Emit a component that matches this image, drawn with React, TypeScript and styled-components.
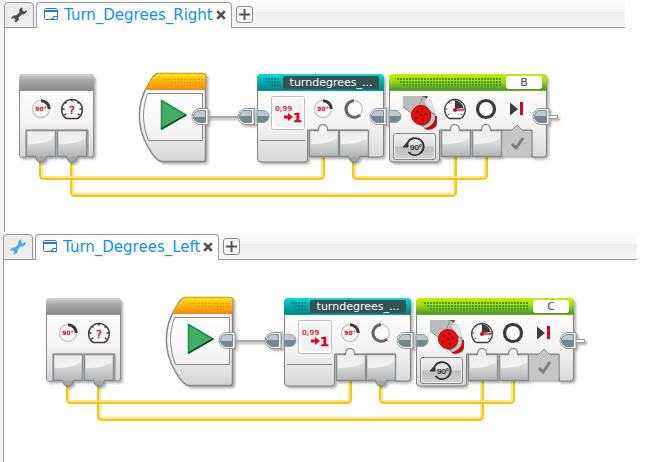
import React from "react";
import styled, { createGlobalStyle } from "styled-components";

const GlobalStyle = createGlobalStyle`
  *, *::before, *::after { box-sizing: border-box; }
  body { margin: 0; background: #fff; font-family: "DejaVu Sans", Verdana, sans-serif; }
  button { font: inherit; padding: 0; cursor: pointer; }
  svg { display: block; }
`;

/* ---------- editor chrome ---------- */

const Page = styled.main`
  display: flex;
  flex-direction: column;
  min-height: 100vh;
`;

const Panel = styled.section<{ $gutter: number; $right: number; $grow?: boolean }>`
  display: flex;
  flex-direction: column;
  flex: ${(p) => (p.$grow ? "1 0 auto" : "0 0 auto")};
  padding-left: ${(p) => p.$gutter}px;
  margin-right: ${(p) => p.$right}px;
  background: linear-gradient(90deg, #f3f4f6 ${(p) => p.$gutter}px, #fff ${(p) => p.$gutter}px);
`;

const TabBar = styled.div`
  display: flex;
  align-items: flex-end;
  height: 28px;
  background: linear-gradient(#fcfcfc 0, #f7f7f7 12px, #efefef 12px, #f7f7f7 27px, #999 27px);
`;

const ToolTab = styled.button`
  display: flex;
  align-items: center;
  justify-content: center;
  width: 30px;
  height: 26px;
  margin-right: 2px;
  border: 1px solid #999;
  border-radius: 4px 4px 0 0;
  background: #ededed;
`;

const Tab = styled.div`
  display: flex;
  align-items: center;
  gap: 3px;
  height: 26px;
  padding: 0 5px 2px 7px;
  border: 1px solid #999;
  border-bottom: 0;
  border-radius: 4px 4px 0 0;
  background: #fff;
`;

const TabLabel = styled.button`
  display: flex;
  align-items: center;
  gap: 6px;
  border: 0;
  background: none;
  color: #0a90ff;
  font-size: 15px;
  line-height: 20px;
  white-space: nowrap;
`;

const CloseButton = styled.button`
  border: 0;
  background: none;
`;

const AddButton = styled.button`
  display: flex;
  align-items: center;
  justify-content: center;
  width: 17px;
  height: 17px;
  margin: 0 0 5px 4px;
  border: 1px solid #8c8c8c;
  border-radius: 3px;
  background: #f8f8f8;
`;

const Canvas = styled.div<{ $top: number; $left: number; $bottom: number }>`
  flex: 1 0 auto;
  padding: ${(p) => `${p.$top}px 0 ${p.$bottom}px ${p.$left}px`};
  border-left: 1px solid #999;
  background: #fff;
`;

/* ---------- programming blocks ---------- */

const Program = styled.div`
  position: relative;
  isolation: isolate;
  width: 545px;
  height: 130px;
`;

const Wires = styled.svg`
  position: absolute;
  inset: 0;
`;

/* isolation keeps each outline behind its own controls and above the wires */
const Node = styled.article<{ $x: number; $w: number }>`
  position: absolute;
  isolation: isolate;
  top: 0;
  left: ${(p) => p.$x}px;
  width: ${(p) => p.$w}px;
  height: 90px;
  padding-top: 1px;
`;

const Silhouette = styled.svg`
  position: absolute;
  top: 0;
  left: 0;
  overflow: visible;
  z-index: -1;
  filter: drop-shadow(2px 2px 1px rgba(0, 0, 0, 0.3));
`;

const headerFill = {
  grey: "linear-gradient(#d2d2d2, #a9a9a9 40%, #8a8a8a)",
  teal: "linear-gradient(#08e0dc, #02b3b3 40%, #078484)",
  green: "linear-gradient(#c2f400, #a9dd12 40%, #449a38)",
};

const Header = styled.header<{ $tone: keyof typeof headerFill }>`
  display: flex;
  align-items: center;
  gap: 4px;
  height: 17px;
  padding: 0 5px;
  border-bottom: 1px solid rgba(0, 0, 0, 0.3);
  border-radius: 4px 4px 0 0;
  background: ${(p) => headerFill[p.$tone]};
`;

const Dots = styled.span<{ $color: string }>`
  flex: 1;
  height: 9px;
  background: radial-gradient(circle at 1px 1px, ${(p) => p.$color} 0.9px, transparent 1px) 0 0 / 3px 3px;
  clip-path: polygon(0 0, 100% 0, 100% 100%, 10px 100%);
`;

const BlockName = styled.span`
  width: 96px;
  height: 13px;
  border-radius: 2px;
  background: #34524f;
  color: #fff;
  font-size: 11px;
  line-height: 13px;
  text-align: center;
`;

const PortSelect = styled.button`
  width: 36px;
  height: 13px;
  border: 0;
  border-radius: 3px;
  background: #fff;
  color: #444;
  font-size: 11px;
  line-height: 13px;
`;

const IconRow = styled.div<{ $pad: number }>`
  display: flex;
  align-items: flex-start;
  gap: 7px;
  padding: 5px 0 0 ${(p) => p.$pad}px;
`;

const Slot = styled.div`
  width: 34px;
  height: 34px;
  margin-right: -1px;
`;

const ModeButton = styled.button`
  display: flex;
  align-items: center;
  justify-content: center;
  width: 43px;
  height: 27px;
  margin: 3px 0 0 4px;
  border: 1px solid #858585;
  border-radius: 3px;
  background: linear-gradient(#f2f2f2, #dedede 48%, #bdbdbd 52%, #d2d2d2);
  box-shadow: inset 0 0 0 1px #eee;
`;

const PlayButton = styled.button`
  border: 0;
  background: none;
  margin: 25px 0 0 21px;
`;

/* ---------- small drawings ---------- */

const Wrench = ({ color }: { color: string }) => (
  <svg width="16" height="16" viewBox="0 0 16 16" fill={color} stroke={color} strokeWidth=".7">
    <path d="M10.8.8C8.9 1.3 8.200 3.300 8.900 5.200L5.100 9C3.300 8.400 1.100 9.100.5 11.400l2.200-.7 1.900 1.600-.7 2.600c2.500.1 4.100-2 3.400-4.400L10.900 6.900c2.300.8 4.500-.8 4.600-3.400l-2.100 1.300-1.900-.5-.3-1.500z" />
  </svg>
);

const ProgramIcon = () => (
  <svg width="14" height="13" viewBox="0 0 14 13" fill="none" stroke="#1f78ee">
    <path d="M7 11.500H1.500L.5 10.500V1.500L1.500.5H12.500L13.500 1.500V8" />
    <path d="M.5 3H13.500" strokeWidth="2" />
    <path d="M9.500 8.500H13.500V11.500H7.500V10.500H9.500z" />
  </svg>
);

const Cross = () => (
  <svg width="10" height="10" viewBox="0 0 10 10" stroke="#505050" strokeWidth="2.600">
    <path d="M1.200 1.200 8.800 8.800M8.800 1.200 1.200 8.800" />
  </svg>
);

const Plus = () => (
  <svg width="11" height="11" viewBox="0 0 11 11" stroke="#555" strokeWidth="2">
    <path d="M0 5.500H11M5.500 0V11" />
  </svg>
);

const Icon = ({ children }: { children: React.ReactNode }) => (
  <svg width="24" height="26" viewBox="-12 -13 24 26">{children}</svg>
);

const AngleGauge = () => (
  <Icon>
    <circle r="8.500" fill="#fafafa" stroke="#c6c6c6" strokeWidth="1.300" />
    <path d="M0-8.300A8.300 8.300 0 0 1 8.300 0" fill="none" stroke="#3c3c3e" strokeWidth="3" />
    <text x="0" y="2" textAnchor="middle" fontSize="6" fontWeight="bold" fill="#e2001a">90°</text>
  </Icon>
);

const DIAL = "M-5.500 9.500A10.300 10.300 0 1 1 5.500 9.500Z";
const TICKS = "M0-10V-7.500M-7-7-5.500-5.500M7-7 5.500-5.500M-10 0H-7.500M10 0H7.500M-7.500 6-6 5M7.500 6 6 5";

const UnknownDial = () => (
  <Icon>
    <path d={DIAL} fill="#fafafa" stroke="#3c3c3e" strokeWidth="1.500" />
    <path d={TICKS} stroke="#3c3c3e" strokeWidth="1.600" />
    <text x="0" y="5" textAnchor="middle" fontSize="11" fill="#e2001a" stroke="#e2001a" strokeWidth=".4">?</text>
  </Icon>
);

const PowerDial = () => (
  <Icon>
    <path d={DIAL} fill="#fafafa" stroke="#3c3c3e" strokeWidth="1.300" />
    <path d={TICKS} stroke="#3c3c3e" />
    <path d="M0 0V-8.500A8.500 8.500 0 0 1 8.500-1z" fill="#3c3c3e" />
    <path d="M0 1 9 1" stroke="#e2001a" strokeWidth="1.300" />
    <circle cx="0" cy="1" r="2" fill="#e2001a" />
  </Icon>
);

const OpenRing = () => (
  <Icon>
    <circle r="8.500" fill="#fafafa" stroke="#c6c6c6" strokeWidth="1.300" />
    <path d="M0-8.300A8.300 8.300 0 1 0 6 6" fill="none" stroke="#666" strokeWidth="3" />
  </Icon>
);

const Ring = () => (
  <Icon>
    <circle r="8.500" fill="#fafafa" stroke="#3c3c3e" strokeWidth="3.200" />
  </Icon>
);

const BrakeIcon = () => (
  <Icon>
    <path d="M-7-6.500 1 0-7 6.500z" fill="#3c3c3e" />
    <path d="M3-7H6V6H3z" fill="#e2001a" />
  </Icon>
);

const RoundIcon = () => (
  <svg width="34" height="34" viewBox="0 0 34 34">
    <rect x=".5" y=".5" width="33" height="33" rx="2" fill="#fff" stroke="#c0c0c0" />
    <rect x="3" y="3" width="28" height="28" fill="#f3f3f3" />
    <text x="4" y="15" fontSize="7" fontWeight="bold" fill="#e23a4d">0,99</text>
    <path d="M13 19.500H17V17L22 21 17 25V22.500H13z" fill="#e2001a" />
    <text x="22" y="26" fontSize="13" fontWeight="bold" fill="#e2001a" stroke="#e2001a" strokeWidth=".5">1</text>
  </svg>
);

const HOLES = [[14, 16], [19, 14], [23, 18], [20, 24], [13, 22], [18, 19]];

const MotorPicture = () => (
  <svg width="34" height="34" viewBox="0 0 34 34">
    <path d="M0 0H20L24 5 16 12 9 18 0 11z" fill="#bcbcbc" />
    <path d="M19 0H25L24 3z" fill="#555" />
    <path d="M20 5 28 4 34 22 33 28 28 33 20 27z" fill="#b0b0b0" />
    <path d="M21 5 28 4 32 17 27 15z" fill="#e2e2e2" />
    <path d="M20 0 16 11M0 11 9 18" fill="none" stroke="#8d8d8d" />
    <path d="M34 20V27C34 31 30 34 24 34L21 32A14 11 0 0 0 32 20z" fill="#c40b10" />
    <path d="M24 12 32 20C32 27 27 31 22 32L15 28z" fill="#6a6a6a" />
    <path d="M28 17 32 20C32 27 27 31 22 32L20 30C27 28 29 24 28 17z" fill="#c5c5c5" />
    <circle cx="18" cy="19" r="9.500" fill="#f10b0b" stroke="#b80000" />
    {HOLES.map(([cx, cy]) => (
      <circle key={`${cx}-${cy}`} cx={cx} cy={cy} r="1.300" fill="#5a0000" />
    ))}
  </svg>
);

const DegreesIcon = () => (
  <svg width="24" height="22" viewBox="0 0 24 22">
    <path d="M5 6A8.500 8.500 0 1 1 5.500 16" fill="none" stroke="#333" strokeWidth="1.800" />
    <path d="M0 11 5 5.500V11z" fill="#333" stroke="#333" />
    <text x="13" y="14" textAnchor="middle" fontFamily="Liberation Sans, Arial, sans-serif" fontSize="8" fill="#222" stroke="#222" strokeWidth=".2">90°</text>
  </svg>
);

/* ---------- block outlines ---------- */

const Gradients = () => (
  <svg width="0" height="0" aria-hidden="true">
    <defs>
      <linearGradient id="body" x1="0" y1="0" x2="0" y2="1">
        <stop offset="0" stopColor="#fff" />
        <stop offset=".55" stopColor="#f5f5f5" />
        <stop offset="1" stopColor="#d6d6d6" />
      </linearGradient>
      <linearGradient id="port" gradientUnits="userSpaceOnUse" x1="0" y1="-5" x2="0" y2="27">
        <stop offset="0" stopColor="#fafafa" />
        <stop offset=".55" stopColor="#d8d9db" />
        <stop offset="1" stopColor="#b0b2b5" />
      </linearGradient>
      <linearGradient id="gloss" x1="0" y1="0" x2="0" y2="1">
        <stop offset="0" stopColor="#eee" />
        <stop offset="1" stopColor="#fff" />
      </linearGradient>
      <linearGradient id="orange" x1="0" y1="0" x2="0" y2="1">
        <stop offset="0" stopColor="#ffe500" />
        <stop offset="1" stopColor="#f98514" />
      </linearGradient>
      <linearGradient id="plug" x1="0" y1="0" x2="0" y2="1">
        <stop offset=".5" stopColor="#bdc9ce" />
        <stop offset=".5" stopColor="#6e8990" />
      </linearGradient>
      <pattern id="orangeDots" width="3" height="3" patternUnits="userSpaceOnUse">
        <rect width="1" height="1" fill="#b9782a" />
      </pattern>
    </defs>
  </svg>
);

const Port = ({ x, kind }: { x: number; kind: "in" | "out" }) => (
  <g transform={`translate(${x} 57)`}>
    <path
      d={kind === "in" ? "M.5.5H9.500V-1A4.500 4.500 0 0 1 18.500-1V.5H29.500V26.500H.5z" : "M.5.5H29.500V26.500H20.500L19.500 29Q18 32 15 32T10.500 29L9.500 26.500H.5z"}
      fill="url(#port)"
      stroke="#8a8a8a"
      strokeWidth="1.300"
    />
    <path d="M2 2H28V8C22 12 14 14 2 14z" fill="url(#gloss)" opacity=".7" />
    {kind === "out" && <path d="M10.500 27H19.500L18.500 29Q17.500 31 15 31T11.500 29z" fill="#a2a4a6" />}
  </g>
);

/* D-shaped sequence plug, rounded towards the left */
const PlugOut = ({ x }: { x: number }) => (
  <g transform={`translate(${x} 35)`}>
    <path d="M17 .5V16.500H9A8 8 0 0 1 9 .5z" fill="#fff" stroke="#929292" />
    <path d="M14.500 2.500V14.500H8.500A6 6 0 0 1 8.500 2.500z" fill="url(#plug)" stroke="#74898f" />
  </g>
);

const PlugIn = () => (
  <g transform="translate(0 37)">
    <path d="M-2 -2.500V15.500M0-2.500V15.500" stroke="#8d8d8d" />
    <path d="M-1 -2V15" stroke="#fff" />
    <path d="M0 .5H6A6 6 0 0 1 6 12.500H0z" fill="url(#plug)" stroke="#8fa0a6" />
  </g>
);

const ParameterBlock = () => (
  <Node $x={0} $w={75} aria-label="Inputs">
    <Silhouette width="75" height="90">
      <path d="M.5 5Q.5 1.500 4 1.500H71Q74.500 1.500 74.500 5V81Q74.500 84 72 84H69V57H7V84H5Q.5 85 .5 82z" fill="url(#body)" stroke="#8a8a8a" />
      <Port x={7} kind="out" />
      <Port x={38} kind="out" />
    </Silhouette>
    <Header $tone="grey" />
    <IconRow $pad={10}>
      <AngleGauge />
      <UnknownDial />
    </IconRow>
  </Node>
);

const StartBlock = () => (
  <Node $x={120} $w={67} aria-label="Start">
    <Silhouette width="67" height="90">
      <path d="M19 .5H64Q66.500.5 66.500 3V86Q66.500 88.500 64 88.500H23Q17 88 9 74C-3 53-2 30 9 12Q15 .5 19 .5z" fill="url(#body)" stroke="#868686" strokeWidth="1.500" />
      <path d="M19 .5H64Q66.500.5 66.500 3V17H6Q13 3 19 .5z" fill="url(#orange)" />
      <path d="M19 4H64V11H30Q24 6 19 4z" fill="url(#orangeDots)" />
      <path d="M63.500 20.500V67.500H9.500C3 50 3 37 8.500 20.500z" fill="#fff" fillOpacity=".4" stroke="#868686" />
      <PlugOut x={52} />
    </Silhouette>
    <PlayButton aria-label="Run program">
      <svg width="28" height="32" viewBox="0 0 28 32">
        <path d="M1.500 1.500 26 16 1.500 30z" fill="#43ad62" stroke="#16924a" strokeWidth="1.500" />
        <path d="M1.500 30 26 16" stroke="#0c4d24" strokeWidth="1.500" />
      </svg>
    </PlayButton>
  </Node>
);

const MyBlock = () => (
  <Node $x={238} $w={127} aria-label="My Block turndegrees">
    <Silhouette width="127" height="90">
      <path d="M-49 44H-19" stroke="#a9a9a9" strokeWidth="2" />
      <PlugOut x={-20} />
      <path d="M.5 5Q.5 1.500 4 1.500H123Q126.500 1.500 126.500 5V81Q126.500 84 123 84H111V57H50.500V86Q50.500 89 47 89H4Q.5 89 .5 86z" fill="url(#body)" stroke="#828282" />
      <path d="M3 67.500H48" stroke="#8a8a8a" />
      <Port x={52} kind="in" />
      <Port x={82} kind="out" />
      <PlugIn />
      <PlugOut x={112} />
    </Silhouette>
    <Header $tone="teal">
      <Dots $color="#087f82" />
      <BlockName>turndegrees_...</BlockName>
    </Header>
    <IconRow $pad={14}>
      <Slot><RoundIcon /></Slot>
      <AngleGauge />
      <OpenRing />
    </IconRow>
  </Node>
);

const MotorBlock = ({ port }: { port: string }) => (
  <Node $x={370} $w={158} aria-label={`Large motor ${port}`}>
    <Silhouette width="158" height="90">
      <path d="M159 44H169" stroke="#999" strokeWidth="4" />
      <path d="M159 44H168" stroke="#fff" strokeWidth="2" />
      <path d="M.5 5Q.5 1.500 4 1.500H154Q157.500 1.500 157.500 5V81Q157.500 84 154 84H143V57H50.500V86Q50.500 89 47 89H4Q.5 89 .5 86z" fill="url(#body)" stroke="#828282" />
      <path d="M113 57.500H122L128 52 134 57.500H143V83H113z" fill="#c6c6c6" />
      <path d="M113 57.500H122.500L128 52 133.500 57.500H143V84" fill="none" stroke="#8a8a8a" />
      <path d="M123 71 127 75 134 65" fill="none" stroke="#7c7c7c" strokeWidth="3" />
      <Port x={52} kind="in" />
      <Port x={83} kind="in" />
      <PlugIn />
      <PlugOut x={143} />
    </Silhouette>
    <Header $tone="green">
      <Dots $color="#4b9a24" />
      <PortSelect aria-label={`Port ${port}`}>{port}</PortSelect>
    </Header>
    <IconRow $pad={14}>
      <Slot><MotorPicture /></Slot>
      <PowerDial />
      <Ring />
      <BrakeIcon />
    </IconRow>
    <ModeButton aria-label="On for degrees"><DegreesIcon /></ModeButton>
  </Node>
);

/* A data wire: a U-shaped run with a lighter inner edge */
const DataWire = ({ from, to, depth }: { from: number; to: number; depth: number }) => (
  <g fill="none" strokeWidth="2">
    <path d={`M${from + 2} 84V${depth - 4}Q${from + 2} ${depth - 2} ${from + 4} ${depth - 2}H${to - 4}Q${to - 2} ${depth - 2} ${to - 2} ${depth - 4}V84`} stroke="#fbe68f" />
    <path d={`M${from} 84V${depth - 4}Q${from} ${depth} ${from + 4} ${depth}H${to - 4}Q${to} ${depth} ${to} ${depth - 4}V84`} stroke="#f9c606" />
  </g>
);

const Diagram = ({ port }: { port: string }) => (
  <Program>
    <Wires width="545" height="130">
      <DataWire from={52} to={437} depth={123} />
      <DataWire from={21} to={305} depth={106} />
      <DataWire from={334} to={468} depth={106} />
    </Wires>
    <ParameterBlock />
    <StartBlock />
    <MyBlock />
    <MotorBlock port={port} />
  </Program>
);

type EditorProps = {
  title: string;
  port: string;
  gutter: number;
  right: number;
  wrench: string;
  top: number;
  left: number;
  bottom: number;
  grow?: boolean;
};

const Editor = ({ title, port, gutter, right, wrench, top, left, bottom, grow }: EditorProps) => (
  <Panel $gutter={gutter} $right={right} $grow={grow} aria-label={title}>
    <TabBar>
      <ToolTab aria-label="Project properties"><Wrench color={wrench} /></ToolTab>
      <Tab>
        <TabLabel><ProgramIcon />{title}</TabLabel>
        <CloseButton aria-label={`Close ${title}`}><Cross /></CloseButton>
      </Tab>
      <AddButton aria-label="New program"><Plus /></AddButton>
    </TabBar>
    <Canvas $top={top} $left={left} $bottom={bottom}>
      <Diagram port={port} />
    </Canvas>
  </Panel>
);

const SharedDefs = styled.div`
  height: 0;
  overflow: hidden;
`;

export default function App() {
  return (
    <>
      <GlobalStyle />
      <SharedDefs><Gradients /></SharedDefs>
      <Page>
        <Editor title="Turn_Degrees_Right" port="B" gutter={4} right={34} wrench="#4a4a4a" top={45} left={14} bottom={29} />
        <Editor title="Turn_Degrees_Left" port="C" gutter={3} right={22} wrench="#3fa9f5" top={37} left={42} bottom={30} grow />
      </Page>
    </>
  );
}
